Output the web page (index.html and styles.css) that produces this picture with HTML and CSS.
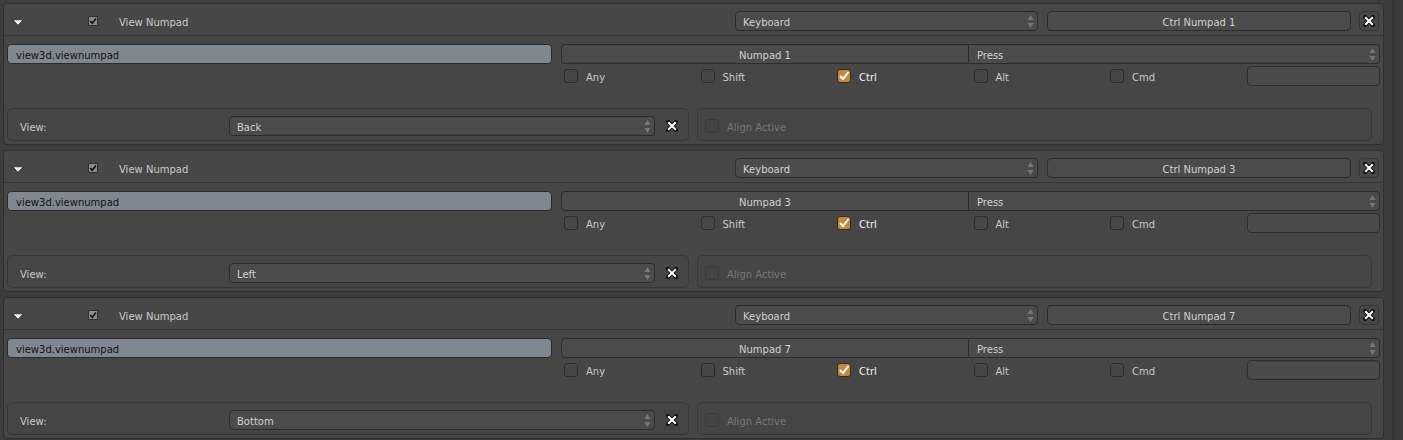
FILE: index.html
```html
<!DOCTYPE html>
<html>
<head>
<meta charset="utf-8">
<link rel="stylesheet" href="styles.css">
</head>
<body>
<div class="screen">
  <div class="list">

    <div class="item">
      <div class="head">
        <span class="tri"><svg width="12" height="7" viewBox="0 0 12 7"><path d="M0.8 0.8 L11.2 0.8 L6 6.3 Z" fill="#f2f2f2" stroke="#2a2a2a" stroke-width="0.8"/></svg></span>
        <span class="hcheck"><svg width="10" height="10" viewBox="0 0 10 10"><path d="M2.2 5 L4.2 7.2 L8 2.4" fill="none" stroke="#111" stroke-width="1.6"/></svg></span>
        <span class="name">View Numpad</span>
        <div class="btn menu kbd"><span>Keyboard</span><svg class="ud" width="7" height="15" viewBox="0 0 7 15"><path d="M0.5 6 L3.5 1 L6.5 6 Z M0.5 9 L3.5 14 L6.5 9 Z" fill="#777"/></svg></div>
        <div class="btn evt">Ctrl Numpad 1</div>
        <div class="btn xbtn"><svg width="12" height="12" viewBox="0 0 12 12"><path d="M2 2 L10 10 M10 2 L2 10" stroke="#111" stroke-width="4" stroke-linecap="square"/><path d="M2.2 2.2 L9.8 9.8 M9.8 2.2 L2.2 9.8" stroke="#fff" stroke-width="2"/></svg></div>
      </div>
      <div class="body">
        <div class="row1">
          <div class="field">view3d.viewnumpad</div>
          <div class="btn key">Numpad 1</div>
          <div class="btn menu press"><span>Press</span><svg class="ud" width="7" height="15" viewBox="0 0 7 15"><path d="M0.5 6 L3.5 1 L6.5 6 Z M0.5 9 L3.5 14 L6.5 9 Z" fill="#777"/></svg></div>
        </div>
        <div class="row2">
          <div class="chk"><span class="box"></span><span>Any</span></div>
          <div class="chk"><span class="box"></span><span>Shift</span></div>
          <div class="chk on"><span class="box"><svg width="14" height="14" viewBox="0 0 14 14"><path d="M3 7 L6 10 L11.5 3" fill="none" stroke="#fff" stroke-width="2"/></svg></span><span>Ctrl</span></div>
          <div class="chk"><span class="box"></span><span>Alt</span></div>
          <div class="chk"><span class="box"></span><span>Cmd</span></div>
          <div class="blank"></div>
        </div>
        <div class="props">
          <div class="sub left">
            <span class="lbl">View:</span>
            <div class="btn menu view"><span>Back</span><svg class="ud" width="7" height="15" viewBox="0 0 7 15"><path d="M0.5 6 L3.5 1 L6.5 6 Z M0.5 9 L3.5 14 L6.5 9 Z" fill="#777"/></svg></div>
            <span class="xs"><svg width="12" height="12" viewBox="0 0 12 12"><path d="M2 2 L10 10 M10 2 L2 10" stroke="#111" stroke-width="4" stroke-linecap="square"/><path d="M2.2 2.2 L9.8 9.8 M9.8 2.2 L2.2 9.8" stroke="#fff" stroke-width="2"/></svg></span>
          </div>
          <div class="sub right">
            <div class="chk dis"><span class="box"></span><span>Align Active</span></div>
          </div>
        </div>
      </div>
    </div>

    <div class="item">
      <div class="head">
        <span class="tri"><svg width="12" height="7" viewBox="0 0 12 7"><path d="M0.8 0.8 L11.2 0.8 L6 6.3 Z" fill="#f2f2f2" stroke="#2a2a2a" stroke-width="0.8"/></svg></span>
        <span class="hcheck"><svg width="10" height="10" viewBox="0 0 10 10"><path d="M2.2 5 L4.2 7.2 L8 2.4" fill="none" stroke="#111" stroke-width="1.6"/></svg></span>
        <span class="name">View Numpad</span>
        <div class="btn menu kbd"><span>Keyboard</span><svg class="ud" width="7" height="15" viewBox="0 0 7 15"><path d="M0.5 6 L3.5 1 L6.5 6 Z M0.5 9 L3.5 14 L6.5 9 Z" fill="#777"/></svg></div>
        <div class="btn evt">Ctrl Numpad 3</div>
        <div class="btn xbtn"><svg width="12" height="12" viewBox="0 0 12 12"><path d="M2 2 L10 10 M10 2 L2 10" stroke="#111" stroke-width="4" stroke-linecap="square"/><path d="M2.2 2.2 L9.8 9.8 M9.8 2.2 L2.2 9.8" stroke="#fff" stroke-width="2"/></svg></div>
      </div>
      <div class="body">
        <div class="row1">
          <div class="field">view3d.viewnumpad</div>
          <div class="btn key">Numpad 3</div>
          <div class="btn menu press"><span>Press</span><svg class="ud" width="7" height="15" viewBox="0 0 7 15"><path d="M0.5 6 L3.5 1 L6.5 6 Z M0.5 9 L3.5 14 L6.5 9 Z" fill="#777"/></svg></div>
        </div>
        <div class="row2">
          <div class="chk"><span class="box"></span><span>Any</span></div>
          <div class="chk"><span class="box"></span><span>Shift</span></div>
          <div class="chk on"><span class="box"><svg width="14" height="14" viewBox="0 0 14 14"><path d="M3 7 L6 10 L11.5 3" fill="none" stroke="#fff" stroke-width="2"/></svg></span><span>Ctrl</span></div>
          <div class="chk"><span class="box"></span><span>Alt</span></div>
          <div class="chk"><span class="box"></span><span>Cmd</span></div>
          <div class="blank"></div>
        </div>
        <div class="props">
          <div class="sub left">
            <span class="lbl">View:</span>
            <div class="btn menu view"><span>Left</span><svg class="ud" width="7" height="15" viewBox="0 0 7 15"><path d="M0.5 6 L3.5 1 L6.5 6 Z M0.5 9 L3.5 14 L6.5 9 Z" fill="#777"/></svg></div>
            <span class="xs"><svg width="12" height="12" viewBox="0 0 12 12"><path d="M2 2 L10 10 M10 2 L2 10" stroke="#111" stroke-width="4" stroke-linecap="square"/><path d="M2.2 2.2 L9.8 9.8 M9.8 2.2 L2.2 9.8" stroke="#fff" stroke-width="2"/></svg></span>
          </div>
          <div class="sub right">
            <div class="chk dis"><span class="box"></span><span>Align Active</span></div>
          </div>
        </div>
      </div>
    </div>

    <div class="item">
      <div class="head">
        <span class="tri"><svg width="12" height="7" viewBox="0 0 12 7"><path d="M0.8 0.8 L11.2 0.8 L6 6.3 Z" fill="#f2f2f2" stroke="#2a2a2a" stroke-width="0.8"/></svg></span>
        <span class="hcheck"><svg width="10" height="10" viewBox="0 0 10 10"><path d="M2.2 5 L4.2 7.2 L8 2.4" fill="none" stroke="#111" stroke-width="1.6"/></svg></span>
        <span class="name">View Numpad</span>
        <div class="btn menu kbd"><span>Keyboard</span><svg class="ud" width="7" height="15" viewBox="0 0 7 15"><path d="M0.5 6 L3.5 1 L6.5 6 Z M0.5 9 L3.5 14 L6.5 9 Z" fill="#777"/></svg></div>
        <div class="btn evt">Ctrl Numpad 7</div>
        <div class="btn xbtn"><svg width="12" height="12" viewBox="0 0 12 12"><path d="M2 2 L10 10 M10 2 L2 10" stroke="#111" stroke-width="4" stroke-linecap="square"/><path d="M2.2 2.2 L9.8 9.8 M9.8 2.2 L2.2 9.8" stroke="#fff" stroke-width="2"/></svg></div>
      </div>
      <div class="body">
        <div class="row1">
          <div class="field">view3d.viewnumpad</div>
          <div class="btn key">Numpad 7</div>
          <div class="btn menu press"><span>Press</span><svg class="ud" width="7" height="15" viewBox="0 0 7 15"><path d="M0.5 6 L3.5 1 L6.5 6 Z M0.5 9 L3.5 14 L6.5 9 Z" fill="#777"/></svg></div>
        </div>
        <div class="row2">
          <div class="chk"><span class="box"></span><span>Any</span></div>
          <div class="chk"><span class="box"></span><span>Shift</span></div>
          <div class="chk on"><span class="box"><svg width="14" height="14" viewBox="0 0 14 14"><path d="M3 7 L6 10 L11.5 3" fill="none" stroke="#fff" stroke-width="2"/></svg></span><span>Ctrl</span></div>
          <div class="chk"><span class="box"></span><span>Alt</span></div>
          <div class="chk"><span class="box"></span><span>Cmd</span></div>
          <div class="blank"></div>
        </div>
        <div class="props">
          <div class="sub left">
            <span class="lbl">View:</span>
            <div class="btn menu view"><span>Bottom</span><svg class="ud" width="7" height="15" viewBox="0 0 7 15"><path d="M0.5 6 L3.5 1 L6.5 6 Z M0.5 9 L3.5 14 L6.5 9 Z" fill="#777"/></svg></div>
            <span class="xs"><svg width="12" height="12" viewBox="0 0 12 12"><path d="M2 2 L10 10 M10 2 L2 10" stroke="#111" stroke-width="4" stroke-linecap="square"/><path d="M2.2 2.2 L9.8 9.8 M9.8 2.2 L2.2 9.8" stroke="#fff" stroke-width="2"/></svg></span>
          </div>
          <div class="sub right">
            <div class="chk dis"><span class="box"></span><span>Align Active</span></div>
          </div>
        </div>
      </div>
    </div>

  </div>
  <div class="gutter"><div class="scroll"></div></div>
</div>
</body>
</html>
```
FILE: styles.css
```css
* { box-sizing: border-box; }
html, body { margin: 0; padding: 0; }
body {
  background: #3d3d3d;
  font-family: "DejaVu Sans", "Liberation Sans", sans-serif;
  font-size: 10px;
  color: #d0d0d0;
  width: 1403px;
  height: 440px;
  overflow: hidden;
}
.screen { display: flex; height: 440px; }
.list {
  width: 1387px;
  padding: 3px 0 0 3px;
  display: flex;
  flex-direction: column;
  gap: 5px;
}
.gutter { width: 16px; display: flex; }
.scroll { margin-left: 5px; width: 3px; background: #353535; }

.item {
  width: 1381px;
  height: 142px;
  flex-shrink: 0;
  border: 1px solid #303030;
  border-radius: 4px;
  background: #464646;
}
.head {
  height: 32px;
  border-bottom: 1px solid #373737;
  display: flex;
  align-items: flex-start;
  padding-top: 7px;
  background: #474747;
  border-radius: 4px 4px 0 0;
}
.tri {
  margin-left: 8px;
  width: 12px;
  height: 20px;
  display: flex;
  align-items: center;
  padding-top: 3px;
}
.hcheck {
  margin-left: 64px;
  margin-top: 5px;
  width: 10px;
  height: 10px;
  background: #8a8a8a;
  border: 1px solid #2e2e2e;
  border-radius: 1px;
  display: flex;
}
.hcheck svg { margin: -1px; }
.name {
  margin-left: 21px;
  line-height: 20px;
  padding-top: 2px;
  color: #c9c9c9;
}

.btn {
  height: 20px;
  border: 1px solid #2c2c2c;
  border-radius: 4px;
  background: #4b4b4b;
  line-height: 17px;
  padding-top: 2px;
  color: #d0d0d0;
  white-space: nowrap;
}
.menu {
  display: flex;
  align-items: center;
  justify-content: space-between;
  padding: 2px 3px 0 7px;
}
.ud { display: block; margin-top: -2px; }
.kbd { margin-left: auto; width: 303px; }
.evt { margin-left: 9px; width: 304px; text-align: center; }
.xbtn {
  margin-left: 8px;
  margin-right: 4px;
  width: 20px;
  display: flex;
  align-items: center;
  justify-content: center;
  padding-top: 0;
  background: #474747;
  border-color: #363636;
}

.body { padding: 8px 3px 3px 3px; }
.row1 { display: flex; height: 20px; }
.field {
  width: 545px;
  height: 20px;
  border: 1px solid #2c2c2c;
  border-radius: 4px;
  background: #7f8791;
  color: #141414;
  line-height: 17px;
  padding-top: 2px;
  padding-left: 8px;
}
.key {
  margin-left: 9px;
  width: 408px;
  text-align: center;
  border-radius: 4px 0 0 4px;
}
.press {
  width: 411px;
  border-left: none;
  border-radius: 0 4px 4px 0;
  padding-left: 8px;
}

.row2 {
  margin-top: 2px;
  height: 20px;
  padding-left: 554px;
  display: grid;
  grid-template-columns: repeat(6, 1fr);
}
.chk {
  display: flex;
  align-items: center;
  color: #c8c8c8;
}
.chk > span:last-child { padding-top: 2px; }
.chk .box {
  width: 14px;
  height: 14px;
  margin-left: 3px;
  margin-right: 8px;
  border: 1px solid #2c2c2c;
  border-radius: 3px;
  background: #474747;
  display: flex;
}
.chk .box svg { margin: -1px; }
.chk.on .box { background: #c4873f; border-color: #3a2a18; }
.chk.on { color: #f2f2f2; }
.blank {
  margin-left: 3px;
  height: 20px;
  border: 1px solid #2c2c2c;
  border-radius: 4px;
  background: #4a4a4a;
}

.props {
  margin-top: 22px;
  display: flex;
  gap: 8px;
  height: 33px;
}
.sub {
  height: 33px;
  border: 1px solid #383838;
  border-radius: 5px;
  background: #454545;
  display: flex;
  align-items: center;
  padding-top: 3px;
}
.sub.left { width: 682px; }
.sub.right { width: 675px; }
.lbl { margin-left: 12px; width: 209px; color: #c8c8c8; padding-top: 2px; }
.view { width: 426px; }
.xs {
  width: 33px;
  display: flex;
  justify-content: center;
  align-items: center;
}
.sub.right .chk .box { margin-left: 7px; border-color: #3a3a3a; background: #444; }
.chk.dis { color: #777; }
```
